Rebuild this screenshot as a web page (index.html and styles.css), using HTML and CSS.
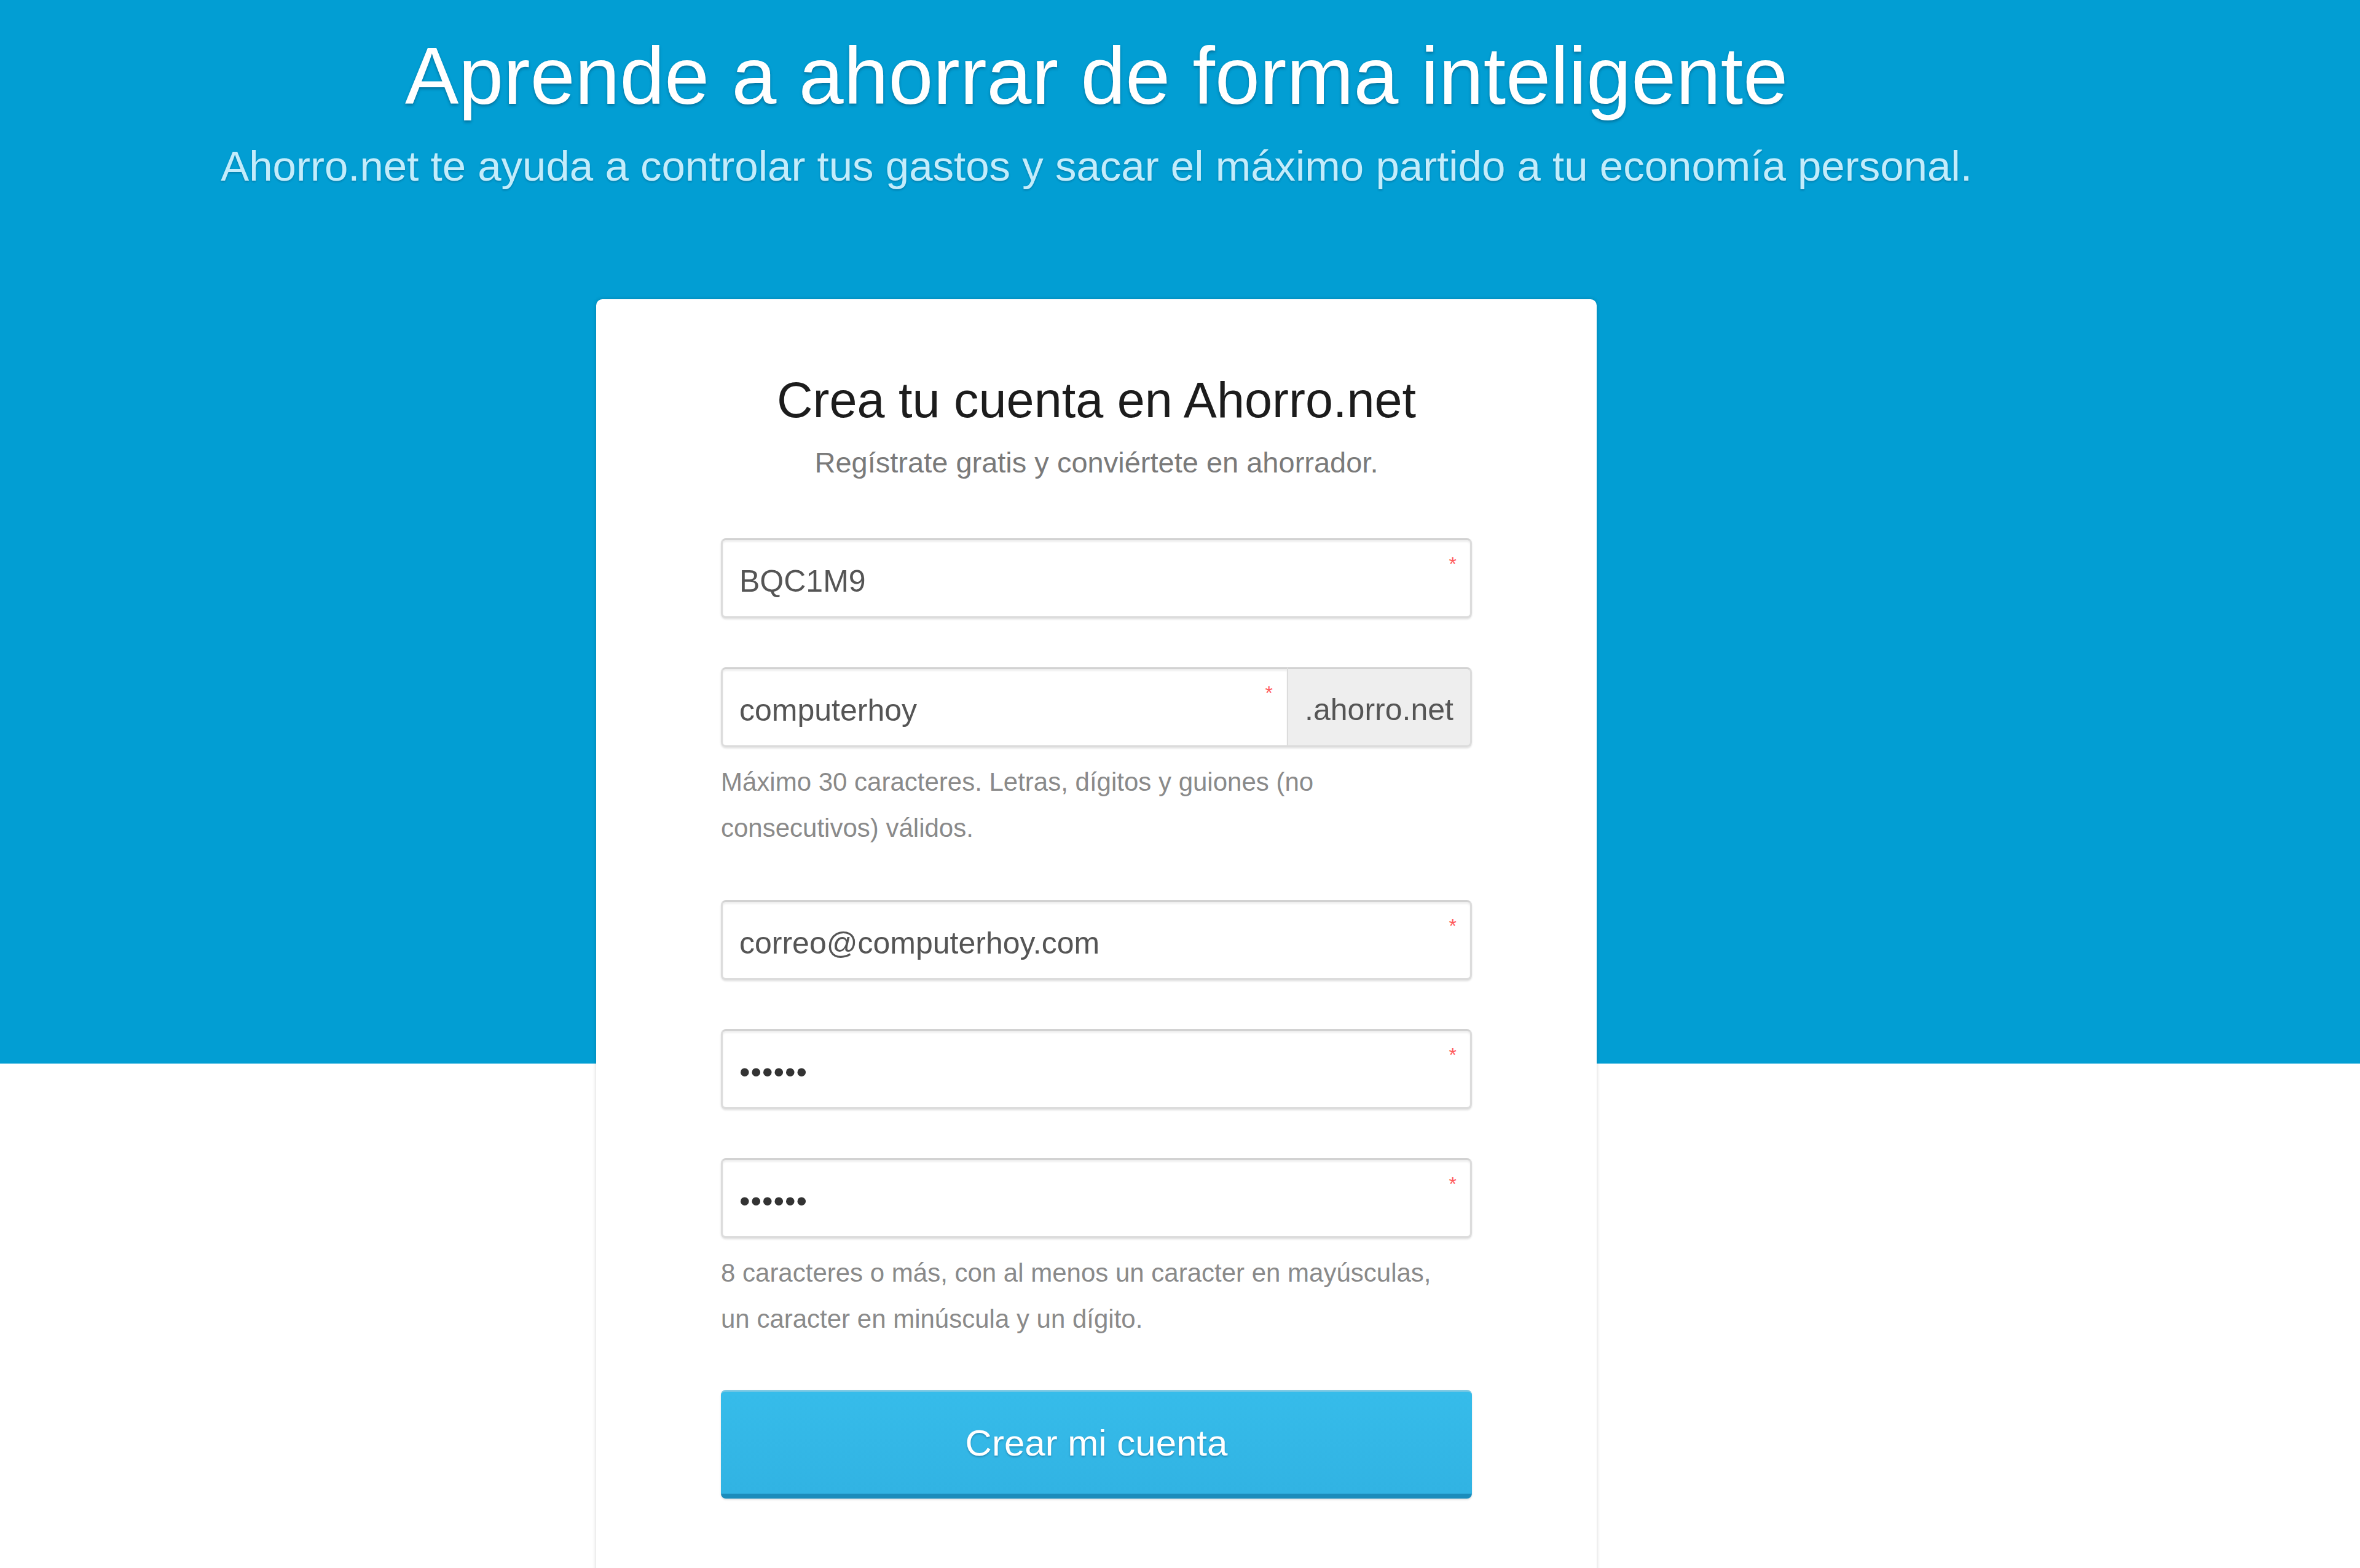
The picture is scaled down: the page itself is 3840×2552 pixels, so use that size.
FILE: index.html
```html
<!DOCTYPE html>
<html lang="es">
<head>
<meta charset="utf-8">
<title>Ahorro.net - Crea tu cuenta</title>
<link rel="stylesheet" href="styles.css">
</head>
<body>
<div class="page">
  <div class="container">
    <header class="hero">
      <h1 class="hero-title">Aprende a ahorrar de forma inteligente</h1>
      <p class="hero-sub">Ahorro.net te ayuda a controlar tus gastos y sacar el máximo partido a tu economía personal.</p>
    </header>
    <main class="card">
      <h2 class="card-title">Crea tu cuenta en Ahorro.net</h2>
      <p class="card-sub">Regístrate gratis y conviértete en ahorrador.</p>
      <form class="form">
        <div class="field">
          <div class="control">
            <input class="input" type="text" value="BQC1M9">
            <span class="req">*</span>
          </div>
        </div>
        <div class="field">
          <div class="group">
            <div class="control grow">
              <input class="input input-left" type="text" value="computerhoy">
              <span class="req">*</span>
            </div>
            <span class="addon">.ahorro.net</span>
          </div>
          <p class="help">Máximo 30 caracteres. Letras, dígitos y guiones (no<br>consecutivos) válidos.</p>
        </div>
        <div class="field">
          <div class="control">
            <input class="input" type="text" value="correo@computerhoy.com">
            <span class="req">*</span>
          </div>
        </div>
        <div class="field">
          <div class="control">
            <input class="input" type="password" value="123456">
            <span class="req">*</span>
          </div>
        </div>
        <div class="field">
          <div class="control">
            <input class="input" type="password" value="123456">
            <span class="req">*</span>
          </div>
          <p class="help">8 caracteres o más, con al menos un caracter en mayúsculas,<br>un caracter en minúscula y un dígito.</p>
        </div>
        <button class="btn" type="button">Crear mi cuenta</button>
      </form>
    </main>
  </div>
</div>
</body>
</html>
```

FILE: styles.css
```css
html, body {
  margin: 0;
  padding: 0;
}

body {
  font-family: "Liberation Sans", Arial, Helvetica, sans-serif;
  background: #ffffff;
  overflow: hidden;
}

.page {
  height: 2552px;
  overflow: hidden;
  background: linear-gradient(to bottom, #029ed3 0, #029ed3 1731px, #ffffff 1731px, #ffffff 100%);
}

.container {
  width: 3568px;
  display: flex;
  flex-direction: column;
  align-items: center;
}

.hero {
  display: flex;
  flex-direction: column;
  align-items: center;
  padding-top: 48px;
}

.hero-title {
  margin: 0;
  font-size: 131px;
  line-height: 152px;
  font-weight: normal;
  color: #ffffff;
  text-shadow: 0 3px 4px rgba(0, 40, 70, 0.35);
}

.hero-sub {
  margin: 31px 0 0;
  font-size: 69px;
  line-height: 80px;
  color: #c3ecfb;
  text-shadow: 0 2px 3px rgba(0, 40, 70, 0.25);
}

.card {
  margin-top: 176px;
  width: 1628px;
  min-height: 2200px;
  box-sizing: border-box;
  padding: 118px 203px 0;
  background: #ffffff;
  border-radius: 10px;
  box-shadow: 0 0 6px rgba(0, 0, 0, 0.18);
  display: flex;
  flex-direction: column;
}

.card-title {
  margin: 0;
  text-align: center;
  font-size: 81px;
  line-height: 93px;
  font-weight: normal;
  color: #1c1c1c;
}

.card-sub {
  margin: 28px 0 0;
  text-align: center;
  font-size: 47px;
  line-height: 53px;
  color: #7a7a7a;
}

.form {
  margin-top: 97px;
  display: flex;
  flex-direction: column;
}

.field {
  margin-bottom: 80px;
}

.control {
  position: relative;
}

.grow {
  flex: 1;
}

.input {
  display: block;
  width: 100%;
  height: 130px;
  box-sizing: border-box;
  margin: 0;
  padding: 10px 60px 0 27px;
  font-family: "Liberation Sans", Arial, Helvetica, sans-serif;
  font-size: 50px;
  color: #555555;
  background: #ffffff;
  border: 3px solid #dcdcdc;
  border-top-color: #d2d2d2;
  border-radius: 8px;
  box-shadow: inset 0 3px 3px rgba(0, 0, 0, 0.07), 0 2px 3px rgba(0, 0, 0, 0.12);
  outline: none;
}

.input[type="password"] {
  color: #333333;
  letter-spacing: 1px;
}

.req {
  position: absolute;
  top: 26px;
  right: 25px;
  font-size: 32px;
  line-height: 32px;
  color: #ff5a5a;
}

.group {
  display: flex;
  border-radius: 8px;
  box-shadow: 0 2px 3px rgba(0, 0, 0, 0.12);
}

.input-left {
  border-radius: 8px 0 0 8px;
  border-right-width: 2px;
  box-shadow: inset 0 3px 3px rgba(0, 0, 0, 0.07);
}

.addon {
  display: flex;
  align-items: center;
  justify-content: center;
  width: 299px;
  height: 130px;
  box-sizing: border-box;
  padding-top: 8px;
  font-size: 50px;
  color: #555555;
  background: #eeeeee;
  border: 3px solid #dcdcdc;
  border-left: 0;
  border-top-color: #d2d2d2;
  border-radius: 0 8px 8px 0;
}

.help {
  margin: 19px 0 0;
  font-size: 42px;
  line-height: 75px;
  color: #8a8a8a;
}

.btn {
  display: block;
  width: 100%;
  height: 177px;
  margin: -2px 0 0;
  padding: 0;
  box-sizing: border-box;
  font-family: "Liberation Sans", Arial, Helvetica, sans-serif;
  font-size: 60px;
  color: #ffffff;
  text-shadow: 0 2px 3px rgba(0, 60, 100, 0.35);
  background: linear-gradient(to bottom, #36bcea 0%, #31b3e3 100%);
  border: 0;
  border-top: 3px solid #7fc9e3;
  border-bottom: 8px solid #1b8cbb;
  border-radius: 8px;
  box-shadow: 0 2px 3px rgba(0, 0, 0, 0.12);
  cursor: pointer;
}
```
